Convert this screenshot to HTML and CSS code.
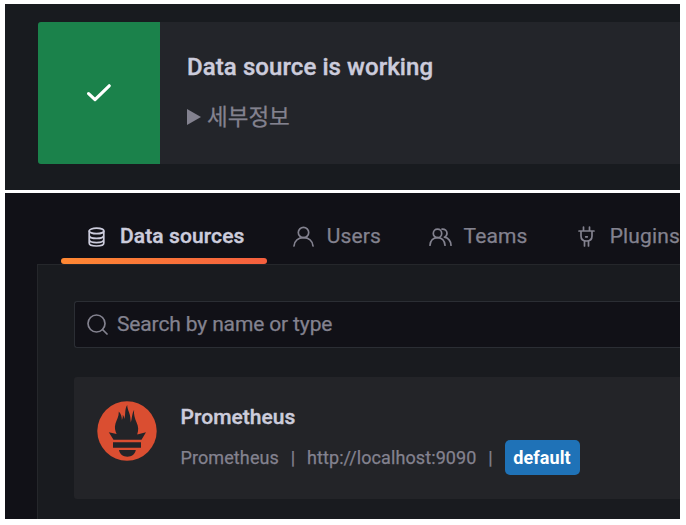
FILE: index.html
```html
<!DOCTYPE html>
<html lang="ko">
<head>
<meta charset="utf-8">
<title>Data sources</title>
<link rel="stylesheet" href="styles.css">
</head>
<body>
<section class="shot status">
  <div class="alert">
    <div class="alert-icon">
      <svg width="24" height="18" viewBox="0 0 24 18"><path d="M1.600 9.600 8 15.600 22.200 1.800"/></svg>
    </div>
    <div class="alert-body">
      <h2 class="alert-title">Data source is working</h2>
      <div class="details"><svg class="arrow" width="14" height="16" viewBox="0 0 14 16"><path d="M0 0 14 8 0 16z"/></svg><span>세부정보</span></div>
    </div>
  </div>
</section>
<section class="shot config">
  <nav class="tabs">
    <a class="tab tab-data active">
      <svg class="icon" width="17" height="20" viewBox="0 0 17 20"><ellipse cx="8.500" cy="3.900" rx="7.300" ry="2.800"/><path d="M1.200 4v12c0 1.700 3 3 7.300 3s7.300-1.300 7.300-3V4M1.200 8.500c.3 1.900 3.200 2.900 7.300 2.900s7-1 7.300-2.900M1.200 12.700c.3 1.900 3.200 2.900 7.300 2.900s7-1 7.300-2.900"/></svg>
      <span>Data sources</span>
    </a>
    <a class="tab tab-users">
      <svg class="icon" width="21" height="21" viewBox="0 0 21 21"><circle cx="10.500" cy="6.500" r="5.200"/><path d="M1 20c.5-5 4.300-8.300 9.500-8.300S19.500 15 20 20"/></svg>
      <span>Users</span>
    </a>
    <a class="tab tab-teams">
      <svg class="icon" width="23" height="18" viewBox="0 0 23 18"><circle cx="8.500" cy="5.400" r="4.200"/><path d="M1 17.300c.3-4.700 3.300-7.700 7.500-7.700s7.200 3 7.500 7.700M13 1.200c2.900-.3 5 1.500 5 4.100 0 2-1 3.200-2.600 3.900 4 .8 6.300 3.700 6.600 8.100"/></svg>
      <span>Teams</span>
    </a>
    <a class="tab tab-plugins">
      <svg class="icon" width="17" height="21" viewBox="0 0 17 21"><path d="M1 5h15M5.500 1v4M11.500 1v4M3 5v5c0 3 2.200 5 5.500 5s5.500-2 5.500-5V5M6.500 15v5M10.500 15v5M7.700 10.800h1.600"/></svg>
      <span>Plugins</span>
    </a>
  </nav>
  <main class="panel">
    <div class="search">
      <svg class="icon" width="21" height="21" viewBox="0 0 21 21"><circle cx="9.500" cy="9.500" r="8.500"/><path d="m15.500 15.500 4.500 4.500"/></svg>
      <span>Search by name or type</span>
    </div>
    <article class="card">
      <svg class="logo" width="60" height="60" viewBox="0 0 60 60"><circle class="disc" cx="30" cy="30" r="29.700"/><g transform="translate(.5 0)"><path class="torch" d="M16 38.700 11.300 31.200l7.800 1.700c-1.500-3.100-2.300-6.500-1.100-10.500 1.100-3.600 3.500-7.100 3.300-11.900 2.100 2.300 3.100 5 3.100 8.500.9-1.900 1-3.400.8-5.200 1.100 1.200 1.500 2.600 1.700 4.300C28.200 13.400 27 8.100 29.700 4c.2 5.300 3.400 8.700 3.300 14.500l.3 3c1.200-3.900 1.100-9.300 3.300-12.800-.6 4.700.8 8.600 2.500 12.900 1.900 4 2.100 7.900.6 11.800l8.800-2.200-4.500 7.500z"/><path class="torch" d="M15.500 41.300h28v5.400h-28zM21.500 49h16.800c-.7 4.200-4.200 6.700-8.400 6.700s-7.800-2.500-8.400-6.700z"/></g></svg>
      <div class="card-text">
        <h3 class="card-title">Prometheus</h3>
        <div class="meta"><span class="type">Prometheus</span><span class="sep">|</span><span class="url">http://localhost:9090</span><span class="sep">|</span><span class="badge">default</span></div>
      </div>
    </article>
  </main>
</section>
</body>
</html>
```
FILE: styles.css
```css
* { box-sizing: border-box; }
body {
  width: 686px;
  height: 525px;
  margin: 0;
  padding: 4px 6px 6px 5px;
  overflow: hidden;
  background: #fff;
  font-family: Roboto, "Noto Sans CJK KR", sans-serif;
  color: #83828f;
  -webkit-text-stroke: .25px currentColor;
}
h2, h3 { margin: 0; font-weight: 500; color: #ccccdc; -webkit-text-stroke: .4px currentColor; }
svg { display: block; flex: none; fill: none; }
.shot { overflow: hidden; white-space: nowrap; }
.status { height: 186px; padding: 18px 0 0 33px; background: #181b1f; }
.alert { display: flex; height: 142px; background: #23252a; border-radius: 3px 0 0 3px; overflow: hidden; }
.alert-icon { display: flex; width: 122px; padding: 62px 0 0 49px; background: #1b824b; }
.alert-icon path { stroke: #fff; stroke-width: 3.2; stroke-linecap: round; stroke-linejoin: round; }
.alert-body { padding: 31px 0 0 27px; }
.alert-title { font-size: 24px; line-height: 28px; letter-spacing: .08px; }
.details { display: flex; align-items: center; gap: 6px; margin-top: 20px; font-size: 22.5px; line-height: 32px; }
.arrow { fill: #83828f; }
.config { height: 326px; margin-top: 3px; background: #111117; }
.tabs { display: flex; height: 71px; padding-left: 56px; }
.tab { position: relative; display: flex; align-items: center; height: 71px; padding-top: 16px; font-size: 21px; letter-spacing: .15px; }
.tab span { margin-top: -1px; }
.icon { stroke: currentColor; stroke-width: 1.7; stroke-linecap: round; stroke-linejoin: round; }
.tab-data { width: 207px; padding-left: 27px; gap: 15px; letter-spacing: .1px; }
.tab-users { width: 136px; margin-left: 1px; padding-left: 25px; gap: 13px; }
.tab-teams { width: 151px; padding-left: 25.5px; gap: 12px; }
.tab-plugins { padding-left: 24.5px; gap: 15px; }
.active { color: #ccccdc; font-weight: 500; -webkit-text-stroke: .4px currentColor; }
.active::after { content: ""; position: absolute; left: 0; right: 0; bottom: 0; height: 6px; border-radius: 3px; background: linear-gradient(90deg, #ff8833, #f55f3e); }
.panel { height: 256px; margin-left: 32px; padding: 36px 0 0 36px; border: solid #25272b; border-width: 1px 0 0 1px; background: #191b1f; }
.search { display: flex; align-items: center; gap: 9px; height: 47px; padding-left: 12px; border: solid #2b2e34; border-width: 1px 0 1px 1px; border-radius: 3px 0 0 3px; background: #111117; font-size: 21px; letter-spacing: -.14px; }
.search span { margin-top: -2px; }
.card { display: flex; height: 122px; margin-top: 29px; padding: 24px 0 0 23px; gap: 23.5px; border-radius: 3px 0 0 3px; background: #232428; }
.disc { fill: #da4e31; }
.torch { fill: #232428; }
.card-title { font-size: 21px; line-height: 32px; letter-spacing: .05px; }
.meta { display: flex; align-items: center; height: 36px; margin-top: 6.5px; font-size: 18px; letter-spacing: .1px; }
.sep { width: 28px; text-align: center; }
.badge { height: 35px; width: 75px; border-radius: 5px; background: #1f72b7; color: #fff; font-weight: 700; line-height: 35px; text-align: center; -webkit-text-stroke: 0; }
```
